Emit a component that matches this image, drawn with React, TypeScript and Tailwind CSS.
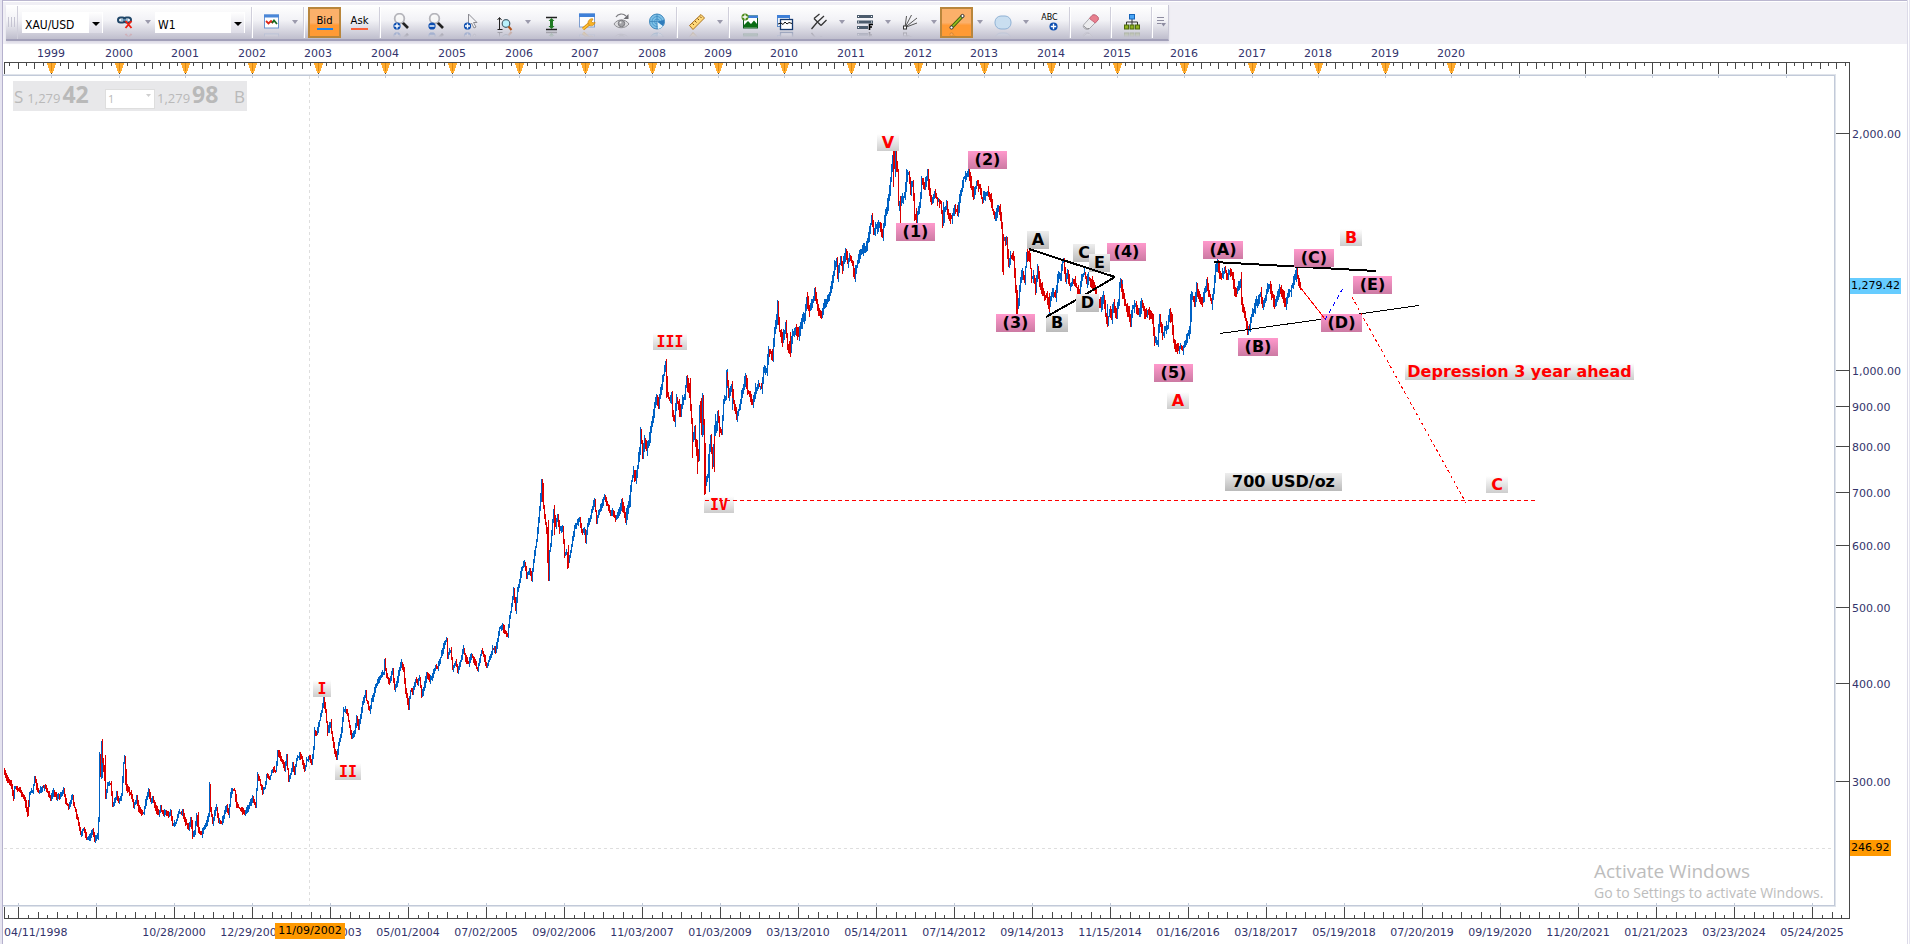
import type { ReactNode } from "react";
import clsx from "clsx";

const BLUE = "#0062c4";
const RED = "#dc0000";

// plot area origin and size, all chart data below is in these coordinates
const PLOT = { x: 3, y: 74, w: 1833, h: 833 };
const RULER_W = 1847;

const years: [number, string][] = [
  [51, "1999"], [119, "2000"], [185, "2001"], [252, "2002"], [318, "2003"], [385, "2004"], [452, "2005"],
  [519, "2006"], [585, "2007"], [652, "2008"], [718, "2009"], [784, "2010"], [851, "2011"], [918, "2012"],
  [984, "2013"], [1051, "2014"], [1117, "2015"], [1184, "2016"], [1252, "2017"], [1318, "2018"], [1385, "2019"],
  [1451, "2020"], [1519, ""], [1585, ""], [1652, ""], [1718, ""], [1786, ""],
];

const dates = [
  "10/28/2000", "12/29/2001", "03/02/2003", "05/01/2004", "07/02/2005", "09/02/2006", "11/03/2007", "01/03/2009",
  "03/13/2010", "05/14/2011", "07/14/2012", "09/14/2013", "11/15/2014", "01/16/2016", "03/18/2017", "05/19/2018",
  "07/20/2019", "09/19/2020", "11/20/2021", "01/21/2023", "03/23/2024", "05/24/2025",
];

const prices: [number, string][] = [
  [133, "2,000.00"], [370, "1,000.00"], [406, "900.00"], [446, "800.00"], [492, "700.00"], [545, "600.00"],
  [607, "500.00"], [683, "400.00"], [781, "300.00"],
];

// x,y pairs of the weekly swings
const swings =
  "4,768 6,774 8,780 11,783 14,797 15,787 18,788 20,790 23,795 25,798 28,814 30,793 33,790 35,778 37,786 39,791 43,787 46,787 49,793 51,797 54,791 57,797 60,795 62,793 64,790 66,801 69,806 71,800 73,797 75,807 78,818 81,833 84,828 87,839 90,837 93,830 95,839 98,836 99,818 100,755 101,775 102,741 103,760 104,768 105,779 106,797 108,785 111,784 113,804 115,801 117,794 119,802 122,795 124,763 125,758 127,787 130,792 132,795 134,807 137,797 139,808 141,812 144,813 147,796 149,789 151,800 153,797 156,808 159,813 161,808 163,813 166,812 169,814 171,812 173,824 176,823 179,812 183,812 186,822 189,827 191,820 193,834 195,832 197,815 199,830 202,834 204,828 207,822 209,815 210,784 211,810 213,822 215,812 217,807 219,820 222,822 225,812 227,807 229,814 231,795 232,790 235,790 237,805 240,808 243,811 245,813 248,808 251,802 253,797 256,804 258,775 260,780 263,791 265,787 267,775 270,778 273,769 276,771 278,752 280,755 283,762 285,768 287,757 289,779 291,774 293,765 295,773 297,758 300,755 302,758 305,770 307,760 310,758 312,762 314,748 315,730 317,733 319,725 321,715 323,706 324,698 326,712 328,732 331,722 333,740 335,750 337,757 339,745 342,729 344,710 346,709 348,715 350,726 352,735 355,733 357,716 359,727 361,715 363,703 366,692 367,700 370,710 372,700 374,695 376,685 379,680 382,674 384,672 385,660 387,676 390,682 393,670 395,688 397,684 400,668 402,662 404,670 406,690 409,706 411,690 413,692 416,680 418,682 420,678 422,695 424,690 427,673 430,680 433,675 436,665 438,668 440,660 443,650 445,641 447,640 448,655 451,650 453,668 456,662 458,670 461,660 464,648 466,658 469,663 472,655 475,662 478,669 480,660 482,650 484,655 487,666 490,658 493,648 496,650 498,640 500,628 503,625 505,632 508,635 510,618 512,605 514,590 516,610 518,590 520,580 522,568 525,562 527,575 530,570 532,578 534,560 537,540 539,520 541,495 542,481 543,500 545,515 547,530 548,560 549,577 550,550 551,545 553,520 554,510 556,525 558,517 560,530 563,528 565,555 567,552 568,566 570,555 572,545 575,528 578,522 580,520 582,532 585,530 586,540 588,525 591,515 594,503 595,500 597,520 600,510 603,502 605,496 608,505 611,514 613,510 616,518 618,515 622,503 624,508 626,518 628,510 630,500 632,480 634,472 636,478 638,465 640,450 641,430 643,452 645,440 647,450 649,443 651,430 653,418 655,405 657,400 659,404 661,392 663,380 665,370 666,363 668,395 670,400 672,395 673,415 675,420 677,398 679,405 681,415 683,400 685,395 687,378 689,388 691,405 693,440 695,430 697,450 699,455 700,405 702,430 703,398 704,420 705,490 706,480 708,475 709,460 711,440 713,465 715,430 717,425 718,412 720,430 722,430 724,402 726,398 727,372 729,395 731,390 732,385 734,400 737,418 740,405 743,390 746,378 748,390 750,395 753,402 756,388 759,386 762,387 764,371 767,370 769,350 771,352 773,355 775,330 777,318 778,305 780,330 783,340 786,325 788,345 791,350 793,332 796,330 799,335 802,322 805,315 807,298 810,310 813,300 815,293 818,308 822,315 825,302 829,297 832,285 835,265 837,262 838,275 841,258 843,268 846,250 848,262 850,255 853,265 855,275 858,262 861,250 864,248 867,246 869,236 872,218 874,232 876,228 880,223 883,234 886,212 889,200 891,180 893,160 894,152 895,165 896,152 898,170 899,205 902,200 905,195 907,175 909,173 911,190 913,182 915,215 917,218 919,210 921,195 922,180 925,186 928,175 930,190 932,200 935,195 938,200 941,202 943,222 945,210 947,205 949,215 952,218 955,208 958,212 960,200 962,190 964,178 967,174 970,175 972,188 974,193 977,182 980,186 982,198 985,196 988,192 991,196 993,210 995,217 998,210 1000,209 1002,225 1003,270 1004,240 1007,240 1009,265 1011,255 1014,258 1016,290 1017,312 1019,300 1021,280 1023,272 1025,280 1027,252 1028,252 1030,258 1032,278 1034,275 1036,290 1038,270 1041,285 1044,295 1047,297 1049,308 1051,298 1054,292 1056,295 1058,278 1061,275 1063,262 1064,260 1066,278 1068,272 1070,285 1073,282 1075,282 1078,290 1080,292 1082,277 1085,272 1087,282 1089,278 1092,282 1095,290 1098,300 1101,305 1104,297 1106,315 1108,322 1110,310 1112,315 1114,303 1117,315 1119,300 1120,285 1121,283 1123,295 1126,305 1129,312 1131,320 1133,308 1136,305 1139,313 1142,303 1145,312 1148,310 1151,315 1153,320 1155,340 1158,340 1160,320 1163,335 1165,330 1168,325 1170,313 1172,320 1174,340 1177,347 1179,350 1181,345 1183,349 1185,345 1187,338 1190,330 1191,300 1193,298 1195,302 1197,287 1200,298 1203,300 1205,290 1207,282 1210,295 1212,303 1214,290 1216,270 1218,265 1220,272 1222,275 1225,270 1228,275 1230,272 1233,275 1235,292 1237,293 1239,285 1241,280 1242,300 1244,310 1246,318 1248,328 1250,327 1252,315 1255,307 1258,300 1261,293 1263,306 1266,295 1268,288 1270,286 1272,293 1275,304 1278,293 1280,288 1283,292 1286,305 1289,292 1291,290 1294,280 1296,272 1297,270 1299,280 1300,287";

// long wicks that stand out of the swings: x, top, bottom, up bar?
const wicks: [number, number, number, boolean][] = [
  [102, 739, 778, true], [105, 755, 780, false], [28, 800, 816, false], [105, 780, 798, false], [125, 758, 785, false],
  [210, 784, 812, false], [192, 820, 839, false], [198, 812, 833, false], [324, 696, 708, true], [541, 479, 502, true],
  [543, 483, 508, false], [548, 520, 579, false], [554, 505, 535, false], [568, 545, 568, false], [666, 360, 398, false],
  [687, 375, 392, false], [690, 378, 410, false], [692, 420, 458, false], [697, 440, 474, false], [701, 398, 435, false],
  [703, 395, 435, true], [705, 443, 494, false], [709, 460, 492, true], [714, 436, 472, false], [715, 414, 436, true],
  [727, 369, 388, true], [732, 383, 410, true], [778, 302, 325, false], [786, 320, 338, false], [790, 332, 355, false],
  [893, 151, 187, false], [895, 151, 177, true], [896, 151, 172, false], [900, 196, 223, false], [907, 170, 182, true],
  [916, 208, 223, false], [928, 172, 190, false], [943, 202, 226, true], [1003, 234, 275, false], [1017, 290, 314, false],
  [1027, 249, 262, false], [1036, 276, 292, true], [1049, 293, 312, false], [1064, 258, 268, false], [1107, 304, 327, true],
  [1112, 304, 324, true], [1122, 280, 292, true], [1131, 310, 324, true], [1154, 332, 346, false], [1179, 346, 354, true],
  [1191, 291, 322, true], [1219, 262, 272, true], [1241, 272, 300, false], [1249, 325, 330, false], [1296, 268, 282, true],
];

const buildBars = () => {
  const pts = swings.split(" ").map((p) => p.split(",").map(Number));
  let seed = 7;
  const rand = () => {
    seed = (seed * 16807) % 2147483647;
    return seed / 2147483647;
  };
  let i = 0;
  const at = (x: number) => {
    while (i < pts.length - 2 && pts[i + 1][0] < x) i++;
    const [x0, y0] = pts[i];
    const [x1, y1] = pts[i + 1];
    const t = Math.max(0, Math.min(1, (x - x0) / (x1 - x0)));
    return y0 + (y1 - y0) * t;
  };
  let up = "";
  let down = "";
  let prev = at(4);
  for (let x = 4; x <= 1300; x++) {
    const next = at(x + 1);
    const spread = x < 620 ? 5 : 9;
    const top = Math.round(Math.min(prev, next) - rand() * spread * 0.7);
    const bottom = Math.round(Math.max(prev, next) + rand() * spread * 0.7 + 1);
    const seg = `M${x} ${top}h1V${bottom}h-1z`;
    if (next - prev + (rand() - 0.5) * 2 < 0) up += seg;
    else down += seg;
    prev = next;
  }
  for (const [x, top, bottom, isUp] of wicks) {
    const seg = `M${x} ${top}h1V${bottom}h-1z`;
    if (isUp) up += seg;
    else down += seg;
  }
  return { up, down };
};

const bars = buildBars();

type Kind = "red" | "pink" | "gray";
type Mark = { t: string; x: number; y: number; w: number; kind: Kind; roman?: boolean };

const marks: Mark[] = [
  { t: "I", x: 313, y: 680, w: 18, kind: "red", roman: true },
  { t: "II", x: 335, y: 763, w: 26, kind: "red", roman: true },
  { t: "III", x: 653, y: 333, w: 34, kind: "red", roman: true },
  { t: "IV", x: 704, y: 496, w: 30, kind: "red", roman: true },
  { t: "V", x: 877, y: 134, w: 22, kind: "red" },
  { t: "(1)", x: 896, y: 223, w: 39, kind: "pink" },
  { t: "(2)", x: 968, y: 151, w: 39, kind: "pink" },
  { t: "(3)", x: 996, y: 314, w: 39, kind: "pink" },
  { t: "(4)", x: 1107, y: 243, w: 39, kind: "pink" },
  { t: "(5)", x: 1154, y: 364, w: 39, kind: "pink" },
  { t: "A", x: 1027, y: 231, w: 22, kind: "gray" },
  { t: "B", x: 1046, y: 314, w: 22, kind: "gray" },
  { t: "C", x: 1073, y: 244, w: 22, kind: "gray" },
  { t: "D", x: 1076, y: 294, w: 23, kind: "gray" },
  { t: "E", x: 1089, y: 254, w: 21, kind: "gray" },
  { t: "A", x: 1167, y: 392, w: 22, kind: "red" },
  { t: "(A)", x: 1203, y: 241, w: 40, kind: "pink" },
  { t: "(B)", x: 1238, y: 338, w: 40, kind: "pink" },
  { t: "(C)", x: 1294, y: 249, w: 40, kind: "pink" },
  { t: "(D)", x: 1321, y: 314, w: 41, kind: "pink" },
  { t: "(E)", x: 1353, y: 276, w: 39, kind: "pink" },
  { t: "B", x: 1340, y: 229, w: 22, kind: "red" },
  { t: "C", x: 1486, y: 476, w: 22, kind: "red" },
  { t: "Depression 3 year ahead", x: 1405, y: 363, w: 229, kind: "red" },
  { t: "700 USD/oz", x: 1225, y: 473, w: 117, kind: "gray" },
];

const markStyles: Record<Kind, string> = {
  red: "h-[17px] text-[#ff0000] bg-linear-to-b from-white to-[#cdcdcd]",
  pink: "h-[18px] text-black bg-linear-to-b from-[#ff99cc] to-[#cc7aa3]",
  gray: "h-[18px] text-black bg-linear-to-b from-[#eeeeee] to-[#bababa]",
};

/* ---------- toolbar ---------- */

function Icon({ children }: { children: ReactNode }) {
  return (
    <svg
      width="18"
      height="18"
      viewBox="0 0 18 18"
      aria-hidden="true"
      className="shrink-0 [-webkit-box-reflect:below_0_linear-gradient(transparent_65%,rgba(0,0,0,0.35))]"
    >
      {children}
    </svg>
  );
}

function Tool({ label, menu, active, children }: { label: string; menu?: boolean; active?: boolean; children: ReactNode }) {
  return (
    <div className="flex items-center h-full">
      <div className={clsx("flex justify-center", menu ? "w-[33px]" : "w-[35px]")}>
        <button
          type="button"
          aria-label={label}
          className={clsx(
            "flex items-center justify-center w-[33px] h-[31px]",
            active && "border-2 border-[#b9863c] bg-linear-to-b from-[#fbb06a] from-50% to-[#ff9a35] to-60%"
          )}
        >
          {children}
        </button>
      </div>
      {menu && (
        <button type="button" aria-label={`${label} options`} className="w-[13px] h-full flex items-center justify-center">
          <svg width="6" height="4" viewBox="0 0 6 4" aria-hidden="true">
            <path d="M0 0h6L3 4z" fill="#9b9aac" />
          </svg>
        </button>
      )}
    </div>
  );
}

function Sep() {
  return <div className="w-[2px] mx-[2px] h-[31px] border-l border-[#d0cfdb] bg-white" />;
}

function Combo({ label, options, className }: { label: string; options: string[]; className: string }) {
  return (
    <div className={clsx("relative h-[21px] bg-white", className)}>
      <select
        aria-label={label}
        className="appearance-none w-full h-full pl-[3px] bg-transparent text-[12px] leading-[18px] pb-[3px] text-black font-['DejaVu_Sans_Condensed','Open_Sans',sans-serif]"
      >
        {options.map((o) => (
          <option key={o}>{o}</option>
        ))}
      </select>
      <span className="absolute right-px inset-y-0 w-[13px] flex items-center justify-center pt-1 bg-linear-to-b from-white to-[#dddce6] pointer-events-none">
        <svg width="8" height="4" viewBox="0 0 8 4" aria-hidden="true">
          <path d="M0 0h8L4 4z" fill="#000" />
        </svg>
      </span>
    </div>
  );
}

function Lens({ minus }: { minus?: boolean }) {
  return (
    <Icon>
      <path d="M10 9l6 6" stroke="#222" strokeWidth="2.6" />
      <circle cx="7.500" cy="5.500" r="4.800" fill="#f6f6f6" stroke="#b4b4ba" strokeWidth="1.800" />
      <path d="M5 4.500c.5-1.500 2-2 3.500-1.500" stroke="#fff" fill="none" />
      <circle cx="5" cy="13" r="3.600" fill="#0b4db0" />
      <path d={minus ? "M2.500 13h5" : "M2.500 13h5M5 10.500v5"} stroke="#fff" strokeWidth="1.400" />
    </Icon>
  );
}

function Toolbar() {
  return (
    <div className="pl-[3px] pt-[3px] h-[42px] bg-[#f0eff5]">
      <div className="inline-flex items-center h-[36px] bg-linear-to-b from-white via-[#f2f2f6] via-45% to-[#bfbecd] border-b-2 border-[#a19fb8] shadow-[0_2px_2px_#dddbe6] border-r border-r-[#c9c8d6]">
        <div className="w-[11px] flex justify-center gap-[2px]">
          <i className="w-px h-[10px] bg-[#c5c4d2]" />
          <i className="w-px h-[10px] bg-[#c5c4d2]" />
          <i className="w-px h-[10px] bg-[#c5c4d2]" />
        </div>
        <div className="w-px h-[33px] bg-[#d0cfdb] mr-1" />
        <Combo label="Symbol" options={["XAU/USD"]} className="w-[81px] mr-[5px]" />
        <Tool label="Unlink chart" menu>
          <Icon>
            <rect x="2" y="4.500" width="7" height="5" rx="2.500" fill="none" stroke="#1f4668" strokeWidth="2" />
            <rect x="8" y="4.500" width="7" height="5" rx="2.500" fill="none" stroke="#1f4668" strokeWidth="2" />
            <path d="M5 7h7" stroke="#78a8cc" strokeWidth="1.400" />
            <path d="M9.500 8l6 7M15.500 8l-6 7" stroke="#f02010" strokeWidth="1.900" />
          </Icon>
        </Tool>
        <Combo label="Timeframe" options={["W1"]} className="w-[90px] mr-1 ml-px" />
        <Sep />
        <Tool label="Chart type" menu>
          <Icon>
            <rect x="1.500" y="2" width="14" height="13" fill="#fff" stroke="#6b94cf" />
            <path d="M1 1.500h15v3H1z" fill="#4a87d8" />
            <path d="M3 8l2.500 2.500L8 8l2 2" stroke="#e02818" strokeWidth="1.800" fill="none" />
            <path d="M9 10l2-2.500 3 3.500" stroke="#176a20" strokeWidth="1.800" fill="none" />
          </Icon>
        </Tool>
        <Sep />
        <Tool label="Bid price" active>
          <span className="text-[10px] leading-3 text-black font-['DejaVu_Sans',sans-serif] border-b-2 border-[#1784f0] pb-px">Bid</span>
        </Tool>
        <Tool label="Ask price">
          <span className="text-[10px] leading-3 text-black font-['DejaVu_Sans',sans-serif] border-b-2 border-[#fb5f38] pb-px">Ask</span>
        </Tool>
        <Sep />
        <Tool label="Zoom in"><Lens /></Tool>
        <Tool label="Zoom out"><Lens minus /></Tool>
        <Tool label="Cursor zoom">
          <Icon>
            <path d="M6.500 1v12l3-3 2.500 5 2-1-2.500-4.500h3.500z" fill="#f4f4f6" stroke="#8b8b92" />
            <circle cx="5.500" cy="13" r="3.600" fill="#0b4db0" />
            <path d="M3 13h5M5.500 10.500v5" stroke="#fff" strokeWidth="1.400" />
          </Icon>
        </Tool>
        <Tool label="Zoom axis" menu>
          <Icon>
            <path d="M3.500 5v12M1.500 7l2-2.500 2 2.500M1.500 16.500h5" stroke="#222" fill="none" />
            <circle cx="10" cy="10.500" r="3.800" fill="#b9f0fb" stroke="#4a6370" strokeWidth="1.200" />
            <path d="M12.500 13.500l3 3.500" stroke="#b1541c" strokeWidth="2" />
          </Icon>
        </Tool>
        <Tool label="Fit height">
          <Icon>
            <path d="M3 4.500h11M3 16.500h11" stroke="#222" strokeWidth="1.500" />
            <path d="M8.500 5l3 3H10v5h1.500l-3 3-3-3H7V8H5.500z" fill="#1f7a22" />
          </Icon>
        </Tool>
        <Tool label="Chart properties">
          <Icon>
            <rect x="1.500" y="1" width="15" height="13" fill="#fdfdfd" stroke="#7f9fd0" />
            <path d="M1 .5h16v3.500H1z" fill="#3f80d8" />
            <path d="M5 16l6-5" stroke="#d98b10" strokeWidth="3.200" />
            <path d="M5 16l6-5" stroke="#ffc838" strokeWidth="1.600" />
            <path d="M10 10c0-3 3-5 5-4l-1.500 2.500 1.500 1.500 2-1c0 3-3 4.500-5.500 3.500z" fill="#f8b426" stroke="#c9800c" strokeWidth=".7" />
          </Icon>
        </Tool>
        <Tool label="Show or hide">
          <Icon>
            <path d="M1 11c3-5 11-6 15 0-4 5-12 5-15 0z" fill="#dcdcdf" stroke="#8d8d92" />
            <circle cx="8.500" cy="10.500" r="3.200" fill="#a2a2a6" stroke="#77777c" />
            <circle cx="7.500" cy="9.500" r="1" fill="#eee" />
            <path d="M3 4c2-3.500 7-4 10-1" stroke="#7c7c80" fill="none" strokeWidth="1.200" />
            <path d="M15.500 1v5h-5z" fill="#6d6d72" />
          </Icon>
        </Tool>
        <Tool label="Radar">
          <Icon>
            <circle cx="9" cy="8.500" r="7.500" fill="#7fc0e6" stroke="#3d86bb" />
            <circle cx="9" cy="8.500" r="5" fill="none" stroke="#4a9bd0" />
            <circle cx="9" cy="8.500" r="2.500" fill="none" stroke="#4a9bd0" />
            <path d="M9 8.500L15 13A7.500 7.500 0 0 1 10 16z" fill="#e2f3fc" />
            <path d="M9 8.500L16 7A7.500 7.500 0 0 1 15 13z" fill="#2f7cbc" />
            <path d="M9 1v15M1.500 8.500H9" stroke="#3d86bb" strokeWidth=".8" />
          </Icon>
        </Tool>
        <Sep />
        <Tool label="Measure" menu>
          <Icon>
            <path d="M1.500 12.500L13 1.500l3.500 3.500L5 16.500z" fill="#ffd97a" stroke="#a8701c" />
            <path d="M4.500 10.500l1.500 1.500M7 8l1.500 1.500M9.500 5.500L11 7M12 3.500L13.500 5" stroke="#7b4d10" />
          </Icon>
        </Tool>
        <Sep />
        <Tool label="Add image">
          <Icon>
            <rect x="2.500" y="3" width="14" height="12" fill="#fff" stroke="#0c5a1e" />
            <path d="M2 2.500h15V5H2z" fill="#3f80d8" />
            <path d="M3 14.500V12l4-4 3 3 3-3.500 3.500 4v3z" fill="#0a6d14" />
            <circle cx="4" cy="4" r="3.500" fill="#4d8c1c" />
            <path d="M1.500 4h5M4 1.500v5" stroke="#fff" strokeWidth="1.300" />
          </Icon>
        </Tool>
        <Tool label="Add indicator window">
          <Icon>
            <rect x="1.500" y="2.500" width="12" height="11" fill="#eef3fb" stroke="#5f8cc9" />
            <path d="M1 2h13v3H1z" fill="#3f80d8" />
            <rect x="4.500" y="6.500" width="12" height="10" fill="#fff" stroke="#163a70" strokeWidth="1.300" />
            <path d="M2 11l3-1 2 1.500 2-2.500 2 2 2-1.500 3 1" stroke="#111" fill="none" />
          </Icon>
        </Tool>
        <Tool label="Pitchfork" menu>
          <Icon>
            <path d="M1.500 16L7 9.500M4 5.500l7 7M4 5.500L9.500 1M7.500 9L14 3M11 12.500L16.500 7" stroke="#333" fill="none" strokeWidth="1.300" />
          </Icon>
        </Tool>
        <Tool label="Fibonacci" menu>
          <Icon>
            <path d="M1 3.500h16M1 9h16M1 14.500h11" stroke="#4b5b6c" strokeWidth="3" />
            <path d="M2 3.500h1M15 3.500h1M2 9h1M15 9h1M2 14.500h1" stroke="#fff" />
            <path d="M13.500 17v-5.500H17M13.500 14H16" stroke="#000" strokeWidth="1.600" fill="none" />
          </Icon>
        </Tool>
        <Tool label="Fan lines" menu>
          <Icon>
            <path d="M3 14.500L4.500 3M3 14.500L9.500 2M3 14.500L15 5M3 14.500L15 10" stroke="#555" fill="none" />
            <rect x="1.500" y="13" width="3" height="3" fill="#fff" stroke="#333" />
          </Icon>
        </Tool>
        <Tool label="Trend line" menu active>
          <Icon>
            <path d="M3.500 14.500L14.500 3" stroke="#3f5c10" strokeWidth="3.400" />
            <path d="M3.500 14.500L14.500 3" stroke="#93c01f" strokeWidth="1.800" />
            <circle cx="3.500" cy="14.500" r="1.600" fill="#fff" stroke="#333" />
            <circle cx="14.500" cy="3" r="1.600" fill="#fff" stroke="#333" />
          </Icon>
        </Tool>
        <Tool label="Shapes" menu>
          <Icon>
            <rect x="1" y="3" width="16" height="13" rx="6" fill="#c9def0" stroke="#8fb1d4" />
          </Icon>
        </Tool>
        <Tool label="Text label">
          <span className="flex flex-col items-start h-[18px]">
            <span className="text-[8px] leading-[9px] text-black font-['DejaVu_Sans',sans-serif]">ABC</span>
            <svg width="9" height="9" viewBox="0 0 10 10" aria-hidden="true" className="self-end shrink-0">
              <circle cx="5" cy="5" r="4.500" fill="#0b4db0" />
              <path d="M2 5h6M5 2v6" stroke="#fff" strokeWidth="1.500" />
            </svg>
          </span>
        </Tool>
        <Sep />
        <Tool label="Eraser">
          <Icon>
            <path d="M1.500 12L10 2.500c2-2 8 1 6 4.500L7 16c-2 1.500-7-1-5.500-4z" fill="#ececee" stroke="#a9a9ae" />
            <path d="M7.500 5.500L10 2.500c2-2 8 1 6 4.500l-2.700 3z" fill="#e87f8e" stroke="#c9677a" />
            <path d="M2 13c1 2 3 3 5 2.500" stroke="#8a8a90" fill="none" />
          </Icon>
        </Tool>
        <Sep />
        <Tool label="Object tree">
          <Icon>
            <path d="M9 5v4M3.500 13V9h11v4M9 9v4" stroke="#333" fill="none" />
            <rect x="6.500" y="1.500" width="5" height="4.500" fill="#49a5f5" stroke="#1664b8" />
            <rect x="1.500" y="12" width="4" height="4" fill="#8fb021" stroke="#4d6a0c" />
            <rect x="7" y="12" width="4" height="4" fill="#8fb021" stroke="#4d6a0c" />
            <rect x="12.500" y="12" width="4" height="4" fill="#8fb021" stroke="#4d6a0c" />
          </Icon>
        </Tool>
        <Sep />
        <button type="button" aria-label="More tools" className="w-[13px] h-full flex items-center justify-center">
          <svg width="9" height="10" viewBox="0 0 9 10" aria-hidden="true">
            <path d="M0 .5h7M0 3.500h7M0 6.500h4" stroke="#8d8ca0" />
            <path d="M4 6h5L6.500 9.500z" fill="#8d8ca0" />
          </svg>
        </button>
      </div>
    </div>
  );
}

/* ---------- rulers ---------- */

function minorTicks(majors: number[], y: number, dir: 1 | -1, min: number, max: number) {
  let d = "";
  for (let i = 0; i < majors.length - 1; i++) {
    const step = (majors[i + 1] - majors[i]) / 8;
    for (let k = 1; k < 8; k++) {
      const x = Math.round(majors[i] + step * k);
      if (x > min && x < max) d += `M${x}.5 ${y}v${(k % 2 ? 3 : 6) * dir}`;
    }
  }
  return d;
}

function TopRuler() {
  const xs = years.map(([x]) => x);
  return (
    <div className="flex h-[30px]">
      <div className="relative flex-1">
        <svg
          className="absolute inset-0 w-full h-full"
          viewBox={`3 44 ${RULER_W} 30`}
          preserveAspectRatio="none"
          shapeRendering="crispEdges"
          fill="none"
          aria-hidden="true"
        >
          <path d="M4.500 74V62.500H1849.500V74" stroke="#484848" />
          <path d={minorTicks([-16, ...xs, 1853], 63, 1, 4, 1849)} stroke="#484848" />
          {years.map(([x, label]) => (
            <g key={x}>
              <path d={`M${x}.5 63v11`} stroke="#484848" />
              {label && <path d={`M${x - 4} 63h9L${x + 2} 73h-3z`} fill="#ffab2e" />}
              {label && <path d={`M${x}.5 63v8`} stroke="#e08a10" />}
            </g>
          ))}
        </svg>
        {years.map(([x, label]) => (
          <span
            key={x}
            className="absolute top-[2px] -translate-x-1/2 text-[11px] leading-4 text-[#33336b]"
            style={{ left: `${((x - 3) / RULER_W) * 100}%` }}
          >
            {label}
          </span>
        ))}
      </div>
      <div className="w-[57px]" />
    </div>
  );
}

function BottomRuler() {
  const xs = Array.from({ length: 24 }, (_, i) => 18 + i * 78);
  return (
    <div className="flex h-[37px]">
      <div className="relative flex-1">
        <svg
          className="absolute inset-0 w-full h-full"
          viewBox={`3 907 ${RULER_W} 37`}
          preserveAspectRatio="none"
          shapeRendering="crispEdges"
          fill="none"
          aria-hidden="true"
        >
          <path d="M4.500 907V918.500H1849.500V907" stroke="#484848" />
          <path d={xs.map((x) => `M${x}.5 907v11`).join("")} stroke="#484848" />
          <path d={minorTicks([-60, ...xs, 1890], 918, -1, 4, 1849)} stroke="#484848" />
        </svg>
        <span className="absolute left-px top-[18px] text-[11px] leading-4 text-[#33336b]">04/11/1998</span>
        {dates.map((d, i) => (
          <span
            key={d}
            className="absolute top-[18px] -translate-x-1/2 text-[11px] leading-4 text-[#33336b]"
            style={{ left: `${((171 + i * 78) / RULER_W) * 100}%` }}
          >
            {d}
          </span>
        ))}
        <span
          className="absolute top-[16px] w-[70px] -translate-x-1/2 text-center bg-[#ff9900] text-[11px] leading-4 text-black"
          style={{ left: `${(307 / RULER_W) * 100}%` }}
        >
          11/09/2002
        </span>
      </div>
      <div className="w-[57px]" />
    </div>
  );
}

function PriceAxis() {
  const top = (y: number) => ({ top: `${((y - PLOT.y) / PLOT.h) * 100}%` });
  return (
    <div className="relative w-[71px] text-[11px] leading-4">
      <svg
        className="absolute inset-0 w-full h-full"
        viewBox={`1836 74 71 ${PLOT.h}`}
        preserveAspectRatio="none"
        shapeRendering="crispEdges"
        fill="none"
        stroke="#484848"
        aria-hidden="true"
      >
        <path d="M1849.500 74V907" />
        <path d={prices.map(([y]) => `M1836 ${y}.5h13`).join("")} />
      </svg>
      {prices.map(([y, label]) => (
        <span key={label} className="absolute left-4 -translate-y-1/2 text-[#33336b]" style={top(y + 2)}>
          {label}
        </span>
      ))}
      <span className="absolute left-[14px] px-px -translate-y-1/2 bg-[#66ccff] text-black" style={top(286)}>
        1,279.42
      </span>
      <span className="absolute left-[14px] px-px -translate-y-1/2 bg-[#ff9900] text-black" style={top(848)}>
        246.92
      </span>
    </div>
  );
}

/* ---------- plot ---------- */

function QuickTrade() {
  return (
    <div className="absolute left-[10px] top-[7px] w-[234px] h-[30px] flex items-center bg-[#e8e8ea] text-[#b9b9b9] font-['Open_Sans',sans-serif]">
      <button type="button" className="flex items-baseline w-[92px] pl-px pb-[3px] leading-none">
        <span className="text-[17px] mr-1">S</span>
        <span className="text-[13px]">1,279</span>
        <b className="text-[23px] ml-[2px]">42</b>
      </button>
      <span className="relative w-[50px] h-[20px] mb-[2px]">
        <select aria-label="Lots" className="appearance-none w-full h-full bg-white text-[11px] pl-[2px] border border-[#dedede]">
          <option>1</option>
        </select>
        <svg width="5" height="3" viewBox="0 0 5 3" aria-hidden="true" className="absolute right-1 top-[9px] pointer-events-none">
          <path d="M0 0h5L2.500 3z" fill="#cfcfcf" />
        </svg>
      </span>
      <button type="button" className="flex items-baseline flex-1 pl-[2px] pr-[2px] pb-[3px] leading-none">
        <span className="text-[13px]">1,279</span>
        <b className="text-[23px] ml-[2px]">98</b>
        <span className="text-[17px] ml-auto">B</span>
      </button>
    </div>
  );
}

function Plot() {
  const layer = {
    viewBox: `${PLOT.x} ${PLOT.y} ${PLOT.w} ${PLOT.h}`,
    preserveAspectRatio: "none",
    shapeRendering: "crispEdges",
    fill: "none",
    "aria-hidden": true,
    className: "absolute inset-0 w-full h-full",
  } as const;
  const majors = Array.from({ length: 24 }, (_, i) => 18 + i * 78);

  return (
    <div className="relative flex-1 overflow-hidden">
      <svg {...layer}>
        <path d="M3 74.500H1835.500V906.500H3" stroke="#dfe3ea" />
        <path d="M3 75.500H1834.500V905.500H3" stroke="#c2cad9" />
        <path d={years.map(([x]) => `M${x}.5 76v2`).join("")} stroke="#c2cad9" />
        <path d={majors.map((x) => `M${x}.5 903v2`).join("")} stroke="#c2cad9" />
        <path d="M309.500 76V905M4 848.500H1834" stroke="#dedede" strokeDasharray="3 3" />
        <path d={bars.up} fill={BLUE} />
        <path d={bars.down} fill={RED} />
        <path d="M1214 262L1376 271" stroke="#000" strokeWidth="2" />
        <path d="M1220 333.500L1419 305.500" stroke="#000" />
        <path d="M1115 277L1076 300" stroke="#000" strokeWidth="2" />
      </svg>

      {marks.map((m) => (
        <span
          key={`${m.t}-${m.x}`}
          className={clsx(
            "absolute text-center whitespace-nowrap font-bold",
            m.roman ? "text-[15px] leading-[18px] font-['DejaVu_Sans_Mono',monospace]" : "text-[16px] leading-[17px]",
            markStyles[m.kind]
          )}
          style={{
            left: `${((m.x - PLOT.x) / PLOT.w) * 100}%`,
            top: `${((m.y - PLOT.y) / PLOT.h) * 100}%`,
            width: m.w,
          }}
        >
          {m.t}
        </span>
      ))}

      <svg {...layer} className="absolute inset-0 w-full h-full pointer-events-none">
        <path d="M1029 249L1115 277M1076 300L1046 317" stroke="#000" strokeWidth="2" />
        <path d="M705 500.500H1538" stroke="#ff0000" strokeDasharray="4 3" />
        <path d="M1300 287L1325 319" stroke="#ff0000" />
        <path d="M1325 320L1343 288" stroke="#0000ff" strokeDasharray="4 4" />
        <path d="M1352 297L1466 503" stroke="#ff0000" strokeDasharray="3 3" />
      </svg>

      <QuickTrade />

      <div className="absolute right-[5px] bottom-[4px] w-[237px] text-[#bdbdbd] font-['Open_Sans',sans-serif] whitespace-nowrap">
        <p className="text-[19px] leading-6">Activate Windows</p>
        <p className="text-[14px] leading-5">Go to Settings to activate Windows.</p>
      </div>
    </div>
  );
}

export default function App() {
  return (
    <div className="flex min-h-screen bg-white font-['DejaVu_Sans',Verdana,sans-serif]">
      <div className="w-[3px] bg-[#e6e4f0] border-r border-[#b5b1cd]" />
      <main className="flex-1 min-w-0 flex flex-col">
        <header className="border-t border-[#bbb7d0] pt-px">
          <Toolbar />
        </header>
        <TopRuler />
        <div className="flex flex-1">
          <Plot />
          <PriceAxis />
        </div>
        <BottomRuler />
      </main>
      <div className="w-[3px] border-l border-[#dcdae8] bg-linear-to-r from-white from-60% to-[#e6e4f0] to-60%" />
    </div>
  );
}
